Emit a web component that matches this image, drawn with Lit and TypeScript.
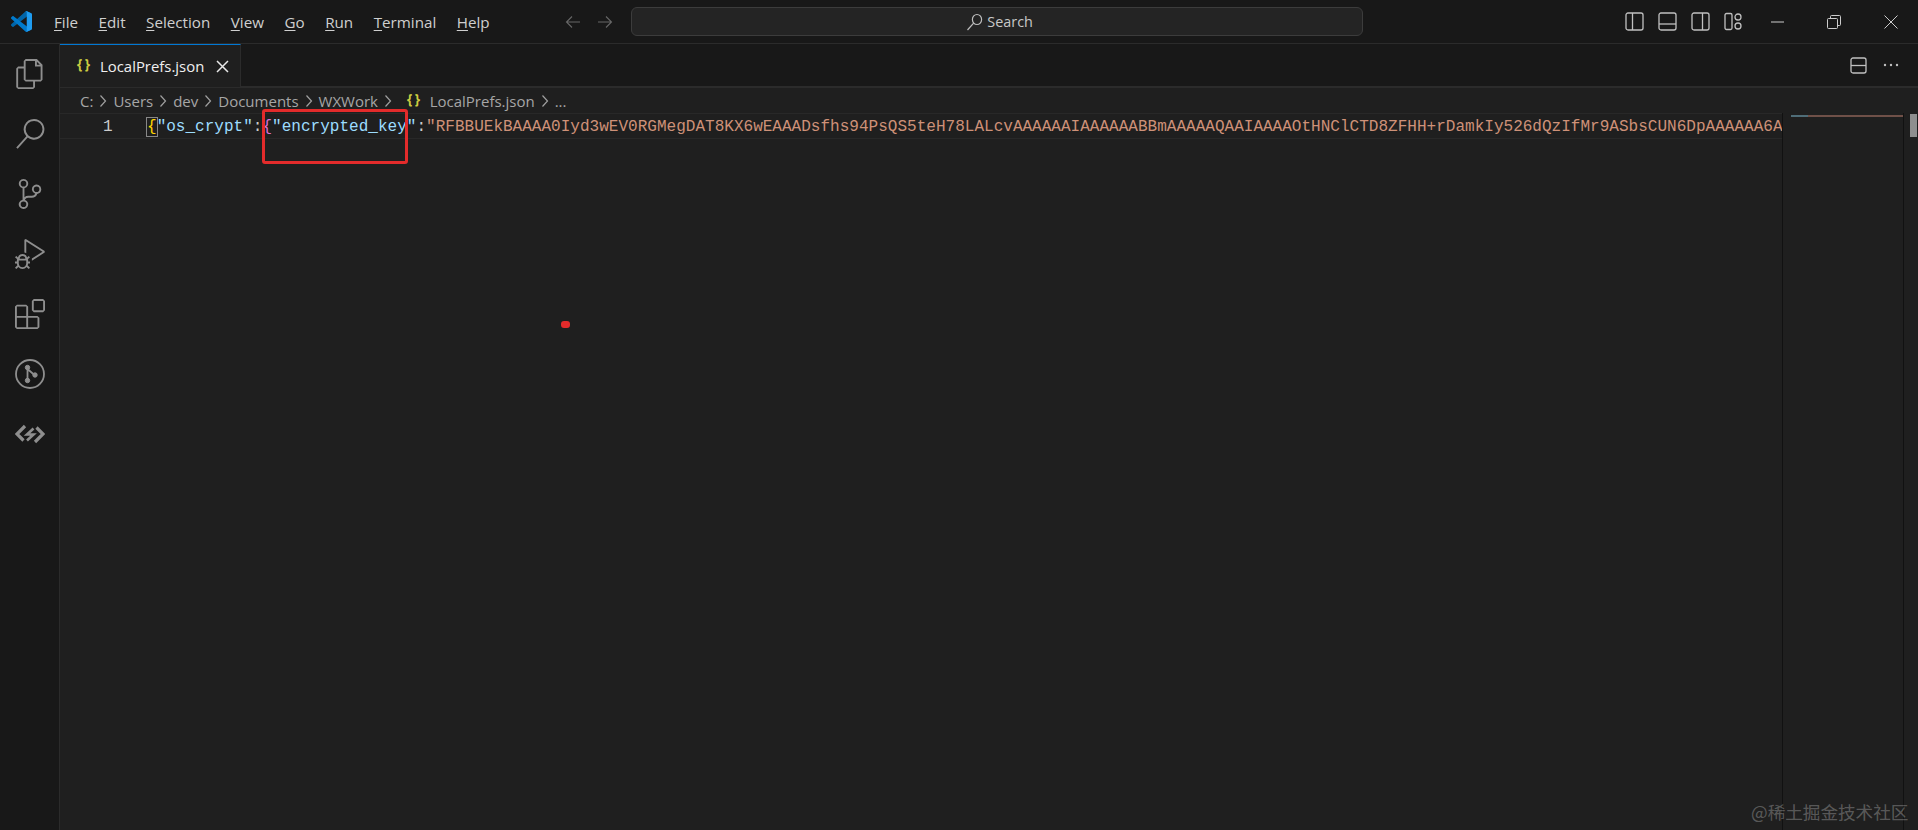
import { LitElement, html, css } from "lit";
import { customElement } from "lit/decorators.js";

const KEY = "RFBBUEkBAAAA0Iyd3wEV0RGMegDAT8KX6wEAAADsfhs94PsQS5teH78LALcvAAAAAAIAAAAAABBmAAAAAQAAIAAAAOtHNClCTD8ZFHH+rDamkIy526dQzIfMr9ASbsCUN6DpAAAAAA6AA";

const chevron = html`<svg class="chev" viewBox="0 0 8 16" width="8" height="16"><path d="M1.5 2.5 6.5 8l-5 5.5" fill="none" stroke="#a0a0a0" stroke-width="1.2"/></svg>`;

@customElement("app-root")
export class AppRoot extends LitElement {
  static styles = css`
    :host { display: block; position: relative; width: 100%; height: 830px; overflow: hidden; background: #1f1f1f; color: #ccc; font-family: "Open Sans", "Noto Sans", sans-serif; }
    svg { display: block; flex: none; }
    .title { height: 43px; background: #181818; border-bottom: 1px solid #2b2b2b; display: flex; align-items: center; position: relative; }
    .logo { margin-left: 11px; width: 21px; height: 21px; margin-right: 22px; }
    .menu { display: flex; gap: 20.5px; font-size: 15.2px; color: #cfcfcf; }
    .menu u { text-underline-offset: 2px; text-decoration-thickness: 1px; }
    .nav { display: flex; gap: 16px; margin-left: 75px; }
    .search { margin-left: 18px; width: 732px; height: 29px; border: 1px solid #3c3c3c; border-radius: 6px; background: #242424; display: flex; align-items: center; justify-content: center; gap: 4px; font-size: 14.4px; color: #c8c8c8; padding-left: 6px; box-sizing: border-box; }
    .right { margin-left: auto; display: flex; align-items: center; }
    .layouts { display: flex; gap: 14px; margin-right: 28px; }
    .win { display: flex; align-items: center; gap: 43px; margin-right: 20px; }
    .main { height: 786px; display: flex; }
    .activity { width: 59px; background: #181818; border-right: 1px solid #2b2b2b; display: flex; flex-direction: column; align-items: center; padding-top: 15px; gap: 30px; box-sizing: content-box; }
    .activity svg { width: 30px; height: 30px; fill: #8e8e8e; }
    .icon-outline { fill: none !important; stroke: #8e8e8e; }
    .icon-dot { fill: #8e8e8e; }
    .editor { flex: 1; min-width: 0; display: flex; flex-direction: column; }
    .tabs { height: 42px; background: #181818; border-bottom: 2px solid #2b2b2b; box-sizing: content-box; display: flex; align-items: flex-start; }
    .tab { width: 181px; height: 43px; box-sizing: border-box; background: #1f1f1f; border-top: 1px solid #0078d4; border-right: 1px solid #2b2b2b; display: flex; align-items: center; padding-left: 17px; font-size: 14.9px; color: #f0f0f0; }
    .tab .curly { color: #cbcb41; font-size: 13.5px; font-weight: 700; width: 23px; letter-spacing: -.5px; margin-top: -4px; }
    .tab .close { margin-left: 12px; }
    .tab-actions { margin-left: auto; display: flex; align-items: center; gap: 16px; height: 42px; margin-right: 19px; }
    .crumbs { height: 25px; display: flex; align-items: center; padding-left: 20px; font-size: 15px; color: #a6a6a6; gap: 5px; flex: none; }
    .crumbs .curly { color: #cbcb41; font-weight: 700; font-size: 13.5px; letter-spacing: -.5px; margin: -4px 5px 0 9px; }
    .chev { margin: 0 1px; }
    .body { flex: 1; display: flex; min-height: 0; }
    .code { flex: 1; min-width: 0; position: relative; overflow: hidden; }
    .line { height: 26px; box-sizing: border-box; border-top: 1px solid #282828; border-bottom: 1px solid #282828; display: flex; align-items: center; padding-top: 1px; font-family: "Liberation Mono", monospace; font-size: 16.05px; white-space: nowrap; }
    .ln { width: 87px; flex: none; box-sizing: border-box; padding-left: 43px; color: #ccc; }
    .punc { color: #ccc; }
    .key { color: #9cdcfe; }
    .str { color: #ce9178; }
    .b1 { color: #ffd700; outline: 1px solid #888; outline-offset: 0; }
    .b2 { color: #da70d6; }
    .minimap { width: 120px; border-left: 1px solid #111; position: relative; flex: none; }
    .mini-line { height: 2px; margin: 2px 0 0 8px; display: flex; }
    .mini-line i { display: block; height: 2px; }
    .m1 { width: 17px; background: #4f6d78; }
    .m2 { flex: 1; background: #6f5048; }
    .scroll { width: 14px; border-left: 1px solid #111; position: relative; flex: none; }
    .thumb { margin: 1px 0 0 6px; width: 7px; height: 23px; background: #8f8f8f; }
    .redbox { position: absolute; left: 262px; top: 109px; width: 146px; height: 55px; box-sizing: border-box; border: 3px solid #e32b2b; border-radius: 3px; }
    .dot { position: absolute; left: 561px; top: 321px; width: 9px; height: 7px; background: #e32b2b; border-radius: 3px; }
    .wm { position: absolute; left: 1751px; top: 800px; font-size: 17.6px; line-height: 24px; color: rgba(255,255,255,.27); white-space: nowrap; font-family: "Noto Sans CJK SC", sans-serif; }
  `;

  render() {
    return html`
      <div class="title">
        <svg class="logo" viewBox="0 0 100 100">
          <path fill="#0065A9" d="M96.46 10.8 75.86.88C73.47-.27 70.62.21 68.75 2.08L1.3 63.58c-1.81 1.65-1.81 4.51 0 6.16l5.51 5.01c1.49 1.35 3.72 1.45 5.32.24L93.36 13.37C96.09 11.3 100 13.25 100 16.67v-.24c0-2.4-1.38-4.59-3.54-5.63Z"/>
          <path fill="#007ACC" d="M96.46 89.2 75.86 99.12c-2.39 1.15-5.24.67-7.11-1.2L1.3 36.42c-1.81-1.65-1.81-4.51 0-6.16l5.51-5.01c1.49-1.35 3.72-1.45 5.32-.24l81.23 61.62c2.73 2.07 6.64.12 6.64-3.3v.24c0 2.4-1.38 4.59-3.54 5.63Z"/>
          <path fill="#1F9CF0" d="M75.86 99.13c-2.39 1.15-5.24.66-7.11-1.21 2.31 2.31 6.25.67 6.25-2.59V4.67c0-3.26-3.94-4.89-6.25-2.59C70.62.21 73.47-.27 75.86.87l20.6 9.91c2.16 1.04 3.54 3.23 3.54 5.63v67.18c0 2.4-1.38 4.59-3.54 5.63L75.86 99.13Z"/>
        </svg>
        <div class="menu">
          <span><u>F</u>ile</span><span><u>E</u>dit</span><span><u>S</u>election</span><span><u>V</u>iew</span><span><u>G</u>o</span><span><u>R</u>un</span><span><u>T</u>erminal</span><span><u>H</u>elp</span>
        </div>
        <div class="nav">
          <svg width="16" height="16" viewBox="0 0 16 16" fill="none" stroke="#666" stroke-width="1.1"><path d="M15 8H1.5M7 2.5 1.5 8 7 13.5"/></svg>
          <svg width="16" height="16" viewBox="0 0 16 16" fill="none" stroke="#666" stroke-width="1.1"><path d="M1 8h13.5M9 2.5 14.5 8 9 13.5"/></svg>
        </div>
        <div class="search">
          <svg width="17" height="18" viewBox="0 0 17 18" fill="none" stroke="#bdbdbd" stroke-width="1.2"><ellipse cx="11" cy="6.5" rx="4.6" ry="5"/><path d="M7.6 10.2 1.5 17"/></svg>
          <span>Search</span>
        </div>
        <div class="right">
          <div class="layouts">
            <svg width="19" height="19" viewBox="0 0 19 19" fill="none" stroke="#c0c0c0" stroke-width="1.3"><rect x="1" y="1" width="17" height="17" rx="2"/><path d="M7.5 1v17"/></svg>
            <svg width="19" height="19" viewBox="0 0 19 19" fill="none" stroke="#c0c0c0" stroke-width="1.3"><rect x="1" y="1" width="17" height="17" rx="2"/><path d="M1 12h17"/></svg>
            <svg width="19" height="19" viewBox="0 0 19 19" fill="none" stroke="#c0c0c0" stroke-width="1.3"><rect x="1" y="1" width="17" height="17" rx="2"/><path d="M11.5 1v17"/></svg>
            <svg width="19" height="19" viewBox="0 0 19 19" fill="none" stroke="#c0c0c0" stroke-width="1.3"><rect x="1" y="1.5" width="7" height="16" rx="1.5"/><circle cx="14" cy="5" r="3"/><circle cx="14" cy="14" r="3"/></svg>
          </div>
          <div class="win">
            <svg width="13" height="2" viewBox="0 0 13 2"><path d="M0 1h13" stroke="#ccc" stroke-width="1"/></svg>
            <svg width="14" height="14" viewBox="0 0 14 14" fill="none" stroke="#ccc" stroke-width="1"><rect x=".5" y="3.5" width="10" height="10" rx="1"/><path d="M3.5 3.5V1.5a1 1 0 0 1 1-1h8a1 1 0 0 1 1 1v8a1 1 0 0 1-1 1h-2"/></svg>
            <svg width="14" height="14" viewBox="0 0 14 14" fill="none" stroke="#ccc" stroke-width="1"><path d="M.5.5l13 13M13.5.5l-13 13"/></svg>
          </div>
        </div>
      </div>
      <div class="main">
        <div class="activity">
          <svg viewBox="0 0 24 24"><path d="M17.5 0h-9L7 1.5V6H2.5L1 7.5v15.07L2.5 24h12.07L16 22.57V18h4.7l1.3-1.43V4.5L17.5 0zm0 2.12l2.38 2.38H17.5V2.12zm-3 20.38h-12v-15H7v9.07L8.5 18h6v4.5zm6-6h-12v-15H16V6h4.5v10.5z"/></svg>
          <svg viewBox="0 0 24 24"><path d="M15.25 0a8.25 8.25 0 0 0-6.18 13.72L1 22.88l1.12 1 8.05-9.12A8.251 8.251 0 1 0 15.25.01V0zm0 15a6.75 6.75 0 1 1 0-13.5 6.75 6.75 0 0 1 0 13.5z"/></svg>
          <svg viewBox="0 0 24 24"><path d="M21.007 8.222A3.738 3.738 0 0 0 15.045 5.2a3.737 3.737 0 0 0 1.156 6.583 2.988 2.988 0 0 1-2.668 1.67h-2.99a4.456 4.456 0 0 0-2.989 1.165V7.4a3.737 3.737 0 1 0-1.494 0v9.117a3.776 3.776 0 1 0 1.816.099 2.99 2.99 0 0 1 2.668-1.667h2.99a4.484 4.484 0 0 0 4.223-3.039 3.736 3.736 0 0 0 3.25-3.687zM4.565 3.738a2.242 2.242 0 1 1 4.484 0 2.242 2.242 0 0 1-4.484 0zm4.484 16.441a2.242 2.242 0 1 1-4.484 0 2.242 2.242 0 0 1 4.484 0zm8.221-9.715a2.242 2.242 0 1 1 0-4.485 2.242 2.242 0 0 1 0 4.485z"/></svg>
          <svg viewBox="0 0 24 24"><path d="M10.94 13.5l-1.32 1.32a3.73 3.73 0 0 0-7.24 0L1.06 13.5 0 14.56l1.72 1.72-.22.22V18H0v1.5h1.5v.08c.077.489.214.966.41 1.42L0 22.94 1.06 24l1.65-1.65A4.308 4.308 0 0 0 6 24a4.31 4.31 0 0 0 3.29-1.65L10.94 24 12 22.94 10.09 21c.198-.464.336-.951.41-1.45v-.05H12V18h-1.5v-1.5l-.22-.22L12 14.56l-1.06-1.06zM6 13.5a2.25 2.25 0 0 1 2.25 2.25h-4.5A2.25 2.25 0 0 1 6 13.5zm3 6a3.33 3.33 0 0 1-3 3 3.33 3.33 0 0 1-3-3v-2.25h6v2.25zm14.76-9.9v1.26L13.5 17.37V15.6l8.5-5.37L9 2v9.46a5.07 5.07 0 0 0-1.5-.72V.63L8.64 0l15.12 9.6z"/></svg>
          <svg viewBox="0 0 24 24"><path d="M13.5 1.5L15 0h7.5L24 1.5V9l-1.5 1.5H15L13.5 9V1.5zm1.5 0V9h7.5V1.5H15zM0 15V6l1.5-1.5H9L10.5 6v7.5H18l1.5 1.5v7.5L18 24H1.5L0 22.5V15zm9-1.5V6H1.5v7.5H9zM9 15H1.5v7.5H9V15zm1.5 7.5H18V15h-7.5v7.5z"/></svg>
          <svg class="icon-outline" viewBox="0 0 30 30"><circle cx="15" cy="15" r="14" stroke-width="1.8"/><path d="M12.5 8v14M12.5 10l7 6" stroke-width="1.8"/><circle class="icon-dot" cx="12.5" cy="8.5" r="2.2"/><circle class="icon-dot" cx="12.5" cy="21.5" r="2.2"/><circle class="icon-dot" cx="20" cy="16" r="2.2"/></svg>
          <svg class="icon-outline" viewBox="0 0 30 30"><path d="M10 7 2 15l6.5 6.5M20 23l8-8-6.5-6.5" stroke-width="3.2"/><path d="M18.5 9.5 12 15.5h6.5L12 21.5" stroke-width="2.6"/></svg>
        </div>
        <div class="editor">
          <div class="tabs">
            <div class="tab">
              <span class="curly">{ }</span><span>LocalPrefs.json</span>
              <svg class="close" width="13" height="13" viewBox="0 0 13 13" fill="none" stroke="#e8e8e8" stroke-width="1.5"><path d="M1 1l11 11M12 1 1 12"/></svg>
            </div>
            <div class="tab-actions">
              <svg width="17" height="17" viewBox="0 0 17 17" fill="none" stroke="#c0c0c0" stroke-width="1.3"><rect x="1" y="1" width="15" height="15" rx="2"/><path d="M1 8.5h15"/></svg>
              <svg width="16" height="4" viewBox="0 0 16 4" fill="#c0c0c0"><circle cx="2" cy="2" r="1.2"/><circle cx="8" cy="2" r="1.2"/><circle cx="14" cy="2" r="1.2"/></svg>
            </div>
          </div>
          <div class="crumbs">
            <span>C:</span>${chevron}<span>Users</span>${chevron}<span>dev</span>${chevron}<span>Documents</span>${chevron}<span>WXWork</span>${chevron}<span class="curly">{ }</span><span>LocalPrefs.json</span>${chevron}<span>...</span>
          </div>
          <div class="body">
            <div class="code">
              <div class="line">
                <span class="ln">1</span><span class="b1">{</span><span class="key">"os_crypt"</span><span class="punc">:</span><span class="b2">{</span><span class="key">"encrypted_key"</span><span class="punc">:</span><span class="str">"${KEY}</span>
              </div>
            </div>
            <div class="minimap"><div class="mini-line"><i class="m1"></i><i class="m2"></i></div></div>
            <div class="scroll"><div class="thumb"></div></div>
          </div>
        </div>
      </div>
      <div class="redbox"></div>
      <div class="dot"></div>
      <div class="wm">@稀土掘金技术社区</div>
    `;
  }
}
